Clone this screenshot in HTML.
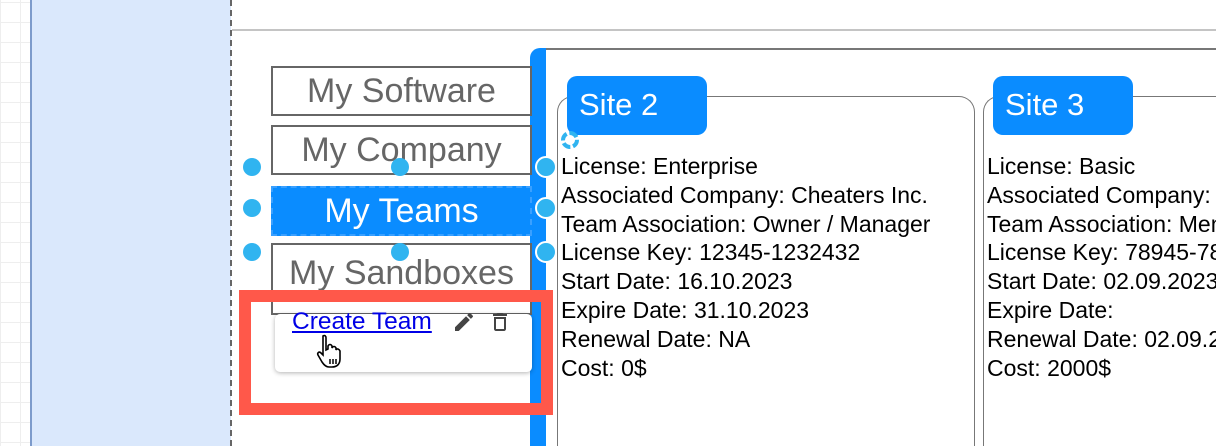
<!DOCTYPE html>
<html><head><meta charset="utf-8"><style>
html,body{margin:0;width:1216px;height:446px;overflow:hidden}
body{position:relative;background:#fff;font-family:"Liberation Sans",Arial,sans-serif}
.a{position:absolute;box-sizing:border-box}
.grid{left:0;top:0;width:31px;height:446px;background-image:linear-gradient(#eee 1px,transparent 1px),linear-gradient(90deg,#eee 1px,transparent 1px);background-size:20px 20px;background-position:0 2px}
.nav{left:271px;width:261px;height:50px;border:2px solid #666;color:#666;font-size:34px;text-align:center;line-height:46px;background:#fff;white-space:nowrap;overflow:hidden}
.dot{width:18px;height:18px;border-radius:50%;background:#30b4f0}
.dw{border:2px solid #fff;width:22px;height:22px}
.card{top:96px;height:350px;border:1.5px solid #777;border-bottom:none;border-radius:16px 16px 0 0}
.lab{top:76px;width:140px;height:59px;background:#0a8cff;border-radius:10px;color:#fff;font-size:31px;padding-left:12px;line-height:58px}
.txt{font-size:23px;line-height:28.8px;color:#000;white-space:nowrap;overflow:hidden}
</style></head><body>
<div class="a grid"></div>
<div class="a" style="left:30px;top:0;width:201px;height:446px;background:#dae8fc;border-left:2px solid #7d9bcb"></div>
<div class="a" style="left:230px;top:0;height:446px;border-left:2px dashed #666"></div>
<div class="a" style="left:232px;top:29px;width:984px;height:2px;background:#c4c4c4"></div>

<div class="a" style="left:546px;top:48px;width:670px;height:2px;background:#777"></div>
<div class="a" style="left:530px;top:48px;width:16px;height:398px;background:#0a8cff;border-top-left-radius:10px"></div>

<div class="a nav" style="top:66px">My Software</div>
<div class="a nav" style="top:125px">My Company</div>
<div class="a nav" style="top:186px;background:#0a8cff;color:#fff;border:2px dashed #3aa0ff">My Teams</div>
<div class="a nav" style="top:243px;height:72px;line-height:56px">My Sandboxes</div>

<div class="a" style="left:239px;top:290px;width:314px;height:125px;border:12px solid #ff584a;background:transparent"></div>
<div class="a" style="left:275px;top:314px;width:257px;height:58px;background:#fff;border-radius:5px;box-shadow:0 1px 5px rgba(0,0,0,.3)"></div>
<div class="a" style="left:292px;top:306px;font-size:24.5px;line-height:32px;color:#0000e6;text-decoration:underline">Create Team</div>
<svg class="a" style="left:452px;top:310px" width="24" height="24" viewBox="0 0 24 24"><path d="M3 17.25V21h3.75L17.81 9.94l-3.75-3.75L3 17.25zM20.71 7.04a1 1 0 0 0 0-1.41l-2.34-2.34a1 1 0 0 0-1.41 0l-1.83 1.83 3.75 3.75 1.83-1.830z" fill="#444"/></svg>
<svg class="a" style="left:488px;top:310px" width="24" height="24" viewBox="0 0 24 24"><path d="M6 19c0 1.1.9 2 2 2h8c1.1 0 2-.9 2-2V7H6v12zM8 9h8v10H8V9zm7.5-5l-1-1h-5l-1 1H5v2h14V4z" fill="#444"/></svg>
<svg class="a" style="left:316px;top:333px" width="34" height="38" viewBox="0 0 34 38"><path d="M7 3c2-1 3 0 3 2v12l2-1V13c1-2 3-2 4 0v2c1-2 3-2 4 0v2c1-2 3-1 4 1v8c0 5-3 8-8 8h-3c-3 0-5-2-7-5L2 22c-1-2 1-4 3-2l2 2V5z" fill="#fff" stroke="#000" stroke-width="1.6"/><path d="M14 26v5M17 26v5M20 26v5" stroke="#000" stroke-width="1.5"/></svg>

<div class="a dot" style="left:243px;top:158px"></div>
<div class="a dot" style="left:391px;top:158px"></div>
<div class="a dot" style="left:243px;top:199px"></div>
<div class="a dot" style="left:243px;top:243px"></div>
<div class="a dot" style="left:391px;top:243px"></div>
<div class="a dot dw" style="left:535px;top:156px"></div>
<div class="a dot dw" style="left:535px;top:197px"></div>
<div class="a dot dw" style="left:535px;top:241px"></div>

<div class="a card" style="left:557px;width:418px"></div>
<div class="a card" style="left:983px;width:233px;border-right:none;border-top-right-radius:0"></div>
<div class="a lab" style="left:567px">Site 2</div>
<div class="a lab" style="left:993px">Site 3</div>
<div class="a" style="left:561px;top:131px;width:18px;height:18px;border-radius:50%;border:4px dashed #30b4f0"></div>

<div class="a txt" style="left:561px;top:152px">License: Enterprise<br>Associated Company: Cheaters Inc.<br>Team Association: Owner / Manager<br>License Key: 12345-1232432<br>Start Date: 16.10.2023<br>Expire Date: 31.10.2023<br>Renewal Date: NA<br>Cost: 0$</div>
<div class="a txt" style="left:987px;top:152px;width:229px">License: Basic<br>Associated Company: Cheaters Inc.<br>Team Association: Member<br>License Key: 78945-7894561<br>Start Date: 02.09.2023<br>Expire Date:<br>Renewal Date: 02.09.2024<br>Cost: 2000$</div>
</body></html>
